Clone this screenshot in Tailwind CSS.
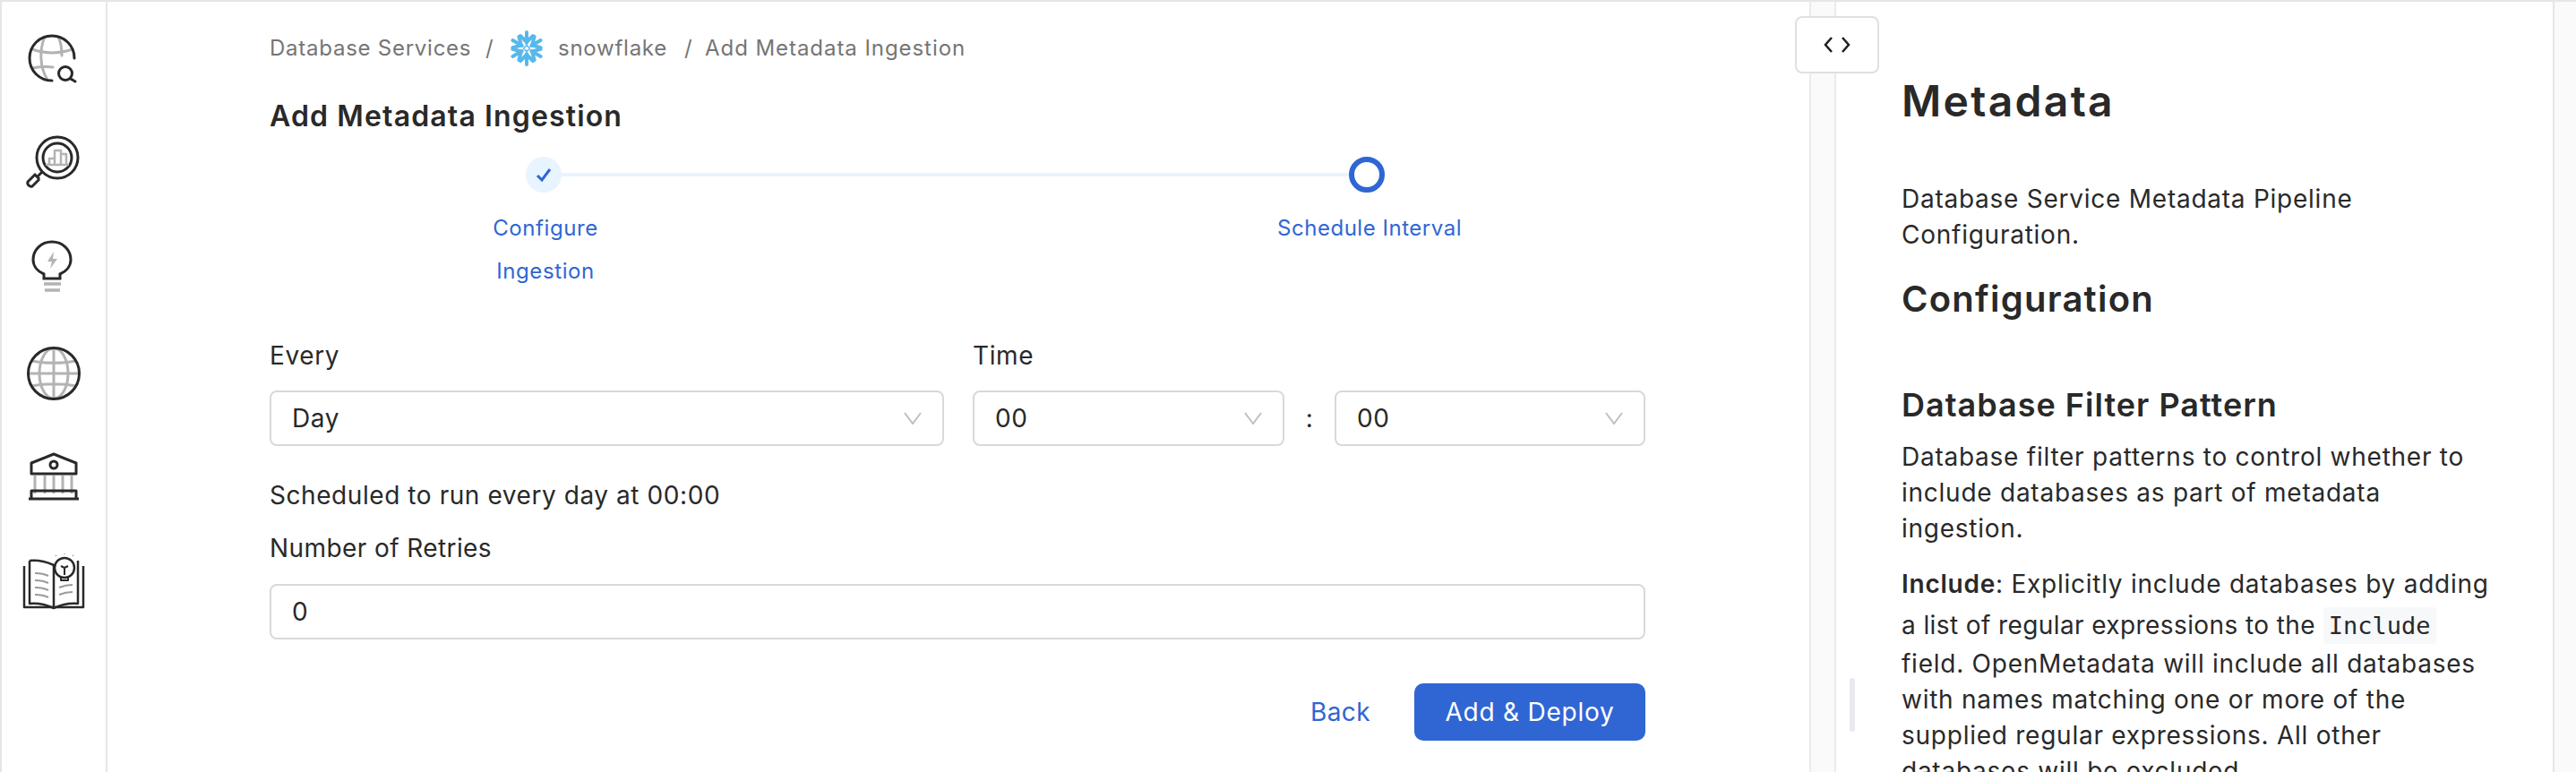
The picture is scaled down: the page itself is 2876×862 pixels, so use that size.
<!DOCTYPE html>
<html lang="en">
<head>
    <meta charset="UTF-8">
    <title>Add Metadata Ingestion</title>
    <script src="https://cdn.jsdelivr.net/npm/@tailwindcss/browser@4"></script>
</head>
<body class="bg-white font-['Inter',sans-serif] text-[#292929]">
<div class="flex w-[2876px] h-[862px] overflow-hidden border-t-2 border-[#e6e6e6]">

    <!-- icon rail -->
    <aside class="w-[120px] shrink-0 border-l-2 border-r-2 border-[#e6e6e6] flex flex-col items-center">
        <svg class="w-[72px] h-[72px] mt-[27px] shrink-0" viewBox="24 29 72 72" fill="none" stroke-width="3" stroke-linecap="round">
            <g stroke="#b3b3b3"><path d="M36 55c14 5 30 5 45 0"/><path d="M36 76c6-1 14-2 23-1"/><path d="M50 41c-6 14-6 34 3 48"/><path d="M65 41c3 6 4 13 4 21"/></g>
            <path d="M83 65c0-14-11-25-25-25s-25 11-25 25 11 25 25 25" stroke="#292929"/>
            <circle cx="73" cy="82" r="7.500" stroke="#292929"/><path d="M79 88l5 3" stroke="#292929"/>
        </svg>
        <svg class="w-[72px] h-[72px] mt-[39px] shrink-0" viewBox="24 140 72 72" fill="none" stroke-width="3" stroke-linejoin="round">
            <circle cx="64" cy="176" r="23" stroke="#292929"/><circle cx="64" cy="176" r="16" stroke="#292929"/>
            <path d="M55 184v-7h6v7M61 184v-16h7v16M68 184v-12h6v12M51 184h26" stroke="#b3b3b3" stroke-width="2.500"/>
            <path d="M47 192l-5 5M38 194l6 6M39 195l-8 8c-1 3 2 6 5 5l8-8" stroke="#292929"/>
        </svg>
        <svg class="w-[72px] h-[72px] mt-[44px] shrink-0" viewBox="24 256 72 72" fill="none" stroke-width="3">
            <path d="M49 311v-5c-7-3-12-9-12-16 0-11 9-20 21-20s21 9 21 20c0 7-5 13-12 16v5z" stroke="#292929"/>
            <path d="M60 281l-7 11h5l-2 8 8-11h-5z" fill="#b3b3b3"/>
            <path d="M49 317h19M50 324h17" stroke="#b3b3b3" stroke-width="3.500"/>
        </svg>
        <svg class="w-[72px] h-[72px] mt-[53px] shrink-0" viewBox="22 381 72 72" fill="none" stroke-width="3">
            <g stroke="#b3b3b3"><ellipse cx="58" cy="417" rx="16" ry="28"/><path d="M58 389v56M30 417h56M34 403c14 3 34 3 48 0M34 431c14-3 34-3 48 0"/></g>
            <circle cx="58" cy="417" r="28.500" stroke="#292929"/>
        </svg>
        <svg class="w-[72px] h-[72px] mt-[43px] shrink-0" viewBox="24 496 72 72" fill="none" stroke-width="3" stroke-linejoin="round">
            <path d="M39 531v20M50 531v20M60 531v20M70 531v20M80 531v20" stroke="#b3b3b3"/>
            <path d="M35 529v-12l25-10 25 10v12z" stroke="#292929"/>
            <circle cx="60" cy="519" r="4" stroke="#292929"/>
            <path d="M35 557v-9h50v9M32 557h56" stroke="#292929"/>
        </svg>
        <svg class="w-[72px] h-[72px] mt-[44px] shrink-0" viewBox="21 612 72 72" fill="none" stroke-width="2.500" stroke-linejoin="round">
            <path d="M24 632v46h66v-46" stroke="#292929"/>
            <path d="M30 626v48c10-1 18 1 27 5 9-4 17-6 27-5v-48" stroke="#292929"/>
            <path d="M30 626c10-1 18 1 27 5v48" stroke="#292929"/>
            <path d="M36 640c6 0 11 1 15 3M36 648c6 0 11 1 15 3M36 656c6 0 11 1 15 3M36 664c6 0 11 1 15 3M63 664c5-2 10-3 15-3M63 656c5-2 10-3 15-3" stroke="#9a9a9a" stroke-width="2"/>
            <circle cx="69" cy="634" r="11" fill="#fff" stroke="#292929"/>
            <path d="M65 632l4 2 4-2M69 634v8M65 645h8v3h-8z" stroke="#292929" stroke-width="2"/>
            <path d="M59 620l1 1M69 618v1M79 620l-1 1" stroke="#9a9a9a" stroke-width="1.500"/>
        </svg>
    </aside>

    <!-- form -->
    <main class="w-[1900px] shrink-0 pl-[181px]">
        <div class="w-[1536px]">
            <nav class="flex items-center h-[40px] mt-[32px] text-[24px] tracking-[0.75px] text-[#757575] whitespace-nowrap">
                <span class="w-[224px]">Database Services</span>
                <span class="ml-[17px] w-[25px]">/</span>
                <svg class="w-[42px] h-[42px]" viewBox="0 0 42 42" fill="none" stroke="#56b9eb" stroke-width="4" stroke-linecap="round" stroke-linejoin="round">
                    <path d="M21 15V3M14 7l7 7 7-7"/>
                    <g transform="rotate(60 21 21)"><path d="M21 15V3M14 7l7 7 7-7"/></g>
                    <g transform="rotate(120 21 21)"><path d="M21 15V3M14 7l7 7 7-7"/></g>
                    <g transform="rotate(180 21 21)"><path d="M21 15V3M14 7l7 7 7-7"/></g>
                    <g transform="rotate(240 21 21)"><path d="M21 15V3M14 7l7 7 7-7"/></g>
                    <g transform="rotate(300 21 21)"><path d="M21 15V3M14 7l7 7 7-7"/></g>
                    <path d="M21 17.500l3.500 3.500-3.500 3.500-3.500-3.500z" stroke-width="1.500"/>
                </svg>
                <span class="ml-[14px] w-[122px]">snowflake</span>
                <span class="ml-[19px] w-[23px]">/</span>
                <span class="tracking-[0.94px]">Add Metadata Ingestion</span>
            </nav>
            <h1 class="mt-[36px] h-[40px] leading-[40px] text-[32px] tracking-[1.14px] font-semibold whitespace-nowrap">Add Metadata Ingestion</h1>

            <!-- stepper -->
            <div class="relative h-[150px] mt-[25px]">
                <div class="absolute left-[326px] top-[18px] w-[899px] h-[4px] bg-[#e8f4ff]"></div>
                <div class="absolute left-[286px] top-0 w-[40px] h-[40px] rounded-full bg-[#e8f4ff] flex items-center justify-center">
                    <svg class="w-[20px] h-[20px]" viewBox="0 0 20 20" fill="none" stroke="#2f66d4" stroke-width="3"><path d="M3 11l5 5 9-12"/></svg>
                </div>
                <div class="absolute left-[1205px] top-0 w-[40px] h-[40px] rounded-full border-[6px] border-[#2f66d4] bg-white"></div>
                <p class="absolute left-[208px] top-[56px] w-[200px] text-center text-[24px] tracking-[0.6px] leading-[48px] text-[#2f66d4]">Configure<br>Ingestion</p>
                <p class="absolute left-[1125px] top-[56px] w-[200px] text-center text-[24px] tracking-[0.53px] leading-[48px] text-[#2f66d4] whitespace-nowrap">Schedule Interval</p>
            </div>

            <div class="flex mt-[54px] text-[28px] tracking-[0.6px]">
                <div class="w-[753px] shrink-0">
                    <label class="block h-[36px] leading-[36px]">Every</label>
                    <div class="mt-[21px] h-[62px] border-2 border-[#d9d9d9] rounded-[8px] flex items-center justify-between px-[23px]">
                        <span>Day</span>
                        <svg class="w-[20px] h-[14px]" viewBox="0 0 20 14" fill="none" stroke="#bfbfbf" stroke-width="2"><path d="M1 1l9 12 9-12"/></svg>
                    </div>
                </div>
                <div class="ml-[32px] flex-1">
                    <label class="block h-[36px] leading-[36px]">Time</label>
                    <div class="mt-[21px] flex items-center">
                        <div class="w-[348px] h-[62px] border-2 border-[#d9d9d9] rounded-[8px] flex items-center justify-between px-[23px]">
                            <span>00</span>
                            <svg class="w-[20px] h-[14px]" viewBox="0 0 20 14" fill="none" stroke="#bfbfbf" stroke-width="2"><path d="M1 1l9 12 9-12"/></svg>
                        </div>
                        <span class="w-[56px] text-center">:</span>
                        <div class="w-[347px] h-[62px] border-2 border-[#d9d9d9] rounded-[8px] flex items-center justify-between px-[23px]">
                            <span>00</span>
                            <svg class="w-[20px] h-[14px]" viewBox="0 0 20 14" fill="none" stroke="#bfbfbf" stroke-width="2"><path d="M1 1l9 12 9-12"/></svg>
                        </div>
                    </div>
                </div>
            </div>

            <p class="mt-[37px] h-[36px] leading-[36px] text-[28px] tracking-[0.57px]">Scheduled to run every day at 00:00</p>
            <label class="block mt-[23px] h-[36px] leading-[36px] text-[28px] tracking-[0.41px]">Number of Retries</label>
            <div class="mt-[22px] h-[62px] border-2 border-[#d9d9d9] rounded-[8px] flex items-center px-[23px] text-[28px]">0</div>

            <div class="mt-[49px] flex items-center justify-end">
                <button class="text-[28px] tracking-[0.4px] text-[#2f66d4]">Back</button>
                <button class="ml-[49px] w-[258px] h-[64px] rounded-[10px] bg-[#2f66d4] text-white text-[28px] tracking-[0.76px]">Add &amp; Deploy</button>
            </div>
        </div>
    </main>

    <!-- resize gutter -->
    <div class="relative w-[30px] shrink-0 bg-[#fafafa] border-l-2 border-r-2 border-[#ebebeb]">
        <button class="absolute left-[-18px] top-[16px] w-[94px] h-[64px] bg-white border-2 border-[#e0e0e0] rounded-[8px] flex items-center justify-center">
            <svg class="w-[30px] h-[18px]" viewBox="0 0 30 18" fill="none" stroke="#1f1f1f" stroke-width="2.500"><path d="M9 1L2 9l7 8M21 1l7 8-7 8"/></svg>
        </button>
    </div>

    <!-- docs panel -->
    <section class="relative w-[802px] shrink-0 pl-[73px] whitespace-nowrap border-r-2 border-[#e6e6e6] overflow-hidden text-[28px] tracking-[0.75px] leading-[40px]">
        <div class="absolute left-[15px] top-[755px] w-[6px] h-[60px] rounded-full bg-[#e9e9f0]"></div>
        <h1 class="mt-[81px] h-[60px] leading-[60px] text-[48px] tracking-[2.29px] font-semibold">Metadata</h1>
        <p class="mt-[59px]">Database Service Metadata Pipeline<br>Configuration.</p>
        <h2 class="mt-[24px] h-[56px] leading-[56px] text-[40px] tracking-[1.23px] font-semibold">Configuration</h2>
        <h3 class="mt-[70px] h-[40px] leading-[40px] text-[36px] tracking-[1px] font-semibold">Database Filter Pattern</h3>
        <p class="mt-[18px]">Database filter patterns to control whether to<br>include databases as part of metadata<br>ingestion.</p>
        <p class="mt-[22px]"><strong class="font-semibold">Include</strong>: Explicitly include databases by adding<br><span class="tracking-[0.4px]">a list of regular expressions to the</span> <code class="inline-block w-[126px] h-[41px] leading-[41px] mt-[6px] mb-[2px] text-center tracking-normal font-['DejaVu_Sans_Mono',monospace] text-[27px] bg-[#f6f8fa] rounded-[4px]">Include</code><br>field. OpenMetadata will include all databases<br>with names matching one or more of the<br>supplied regular expressions. All other<br>databases will be excluded.</p>
    </section>
    <div class="flex-1 bg-[#fafafa]"></div>
</div>
</body>
</html>
